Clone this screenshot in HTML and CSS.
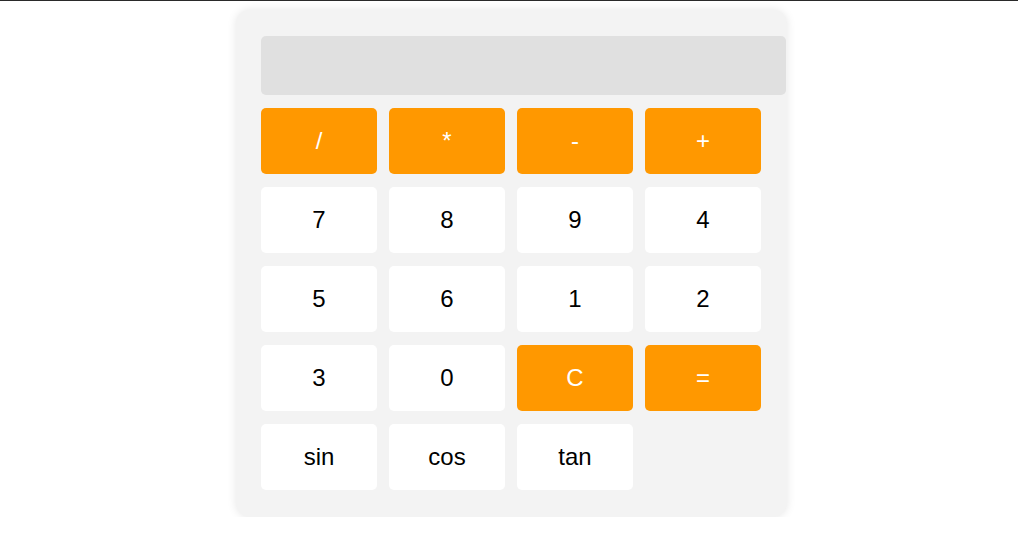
FILE: index.html
```html
<!DOCTYPE html>
<html lang="en">
<head>
<meta charset="utf-8">
<title>Calculator</title>
<link rel="stylesheet" href="styles.css">
</head>
<body>
<div class="page">
  <div class="calculator">
    <div class="display"></div>
    <div class="keys">
      <button class="key op">/</button>
      <button class="key op">*</button>
      <button class="key op">-</button>
      <button class="key op">+</button>
      <button class="key">7</button>
      <button class="key">8</button>
      <button class="key">9</button>
      <button class="key">4</button>
      <button class="key">5</button>
      <button class="key">6</button>
      <button class="key">1</button>
      <button class="key">2</button>
      <button class="key">3</button>
      <button class="key">0</button>
      <button class="key op">C</button>
      <button class="key op">=</button>
      <button class="key">sin</button>
      <button class="key">cos</button>
      <button class="key">tan</button>
    </div>
  </div>
</div>
</body>
</html>
```
FILE: styles.css
```css
html, body {
  margin: 0;
  padding: 0;
  background: #ffffff;
}
body {
  border-top: 1px solid #2a2a2a;
  font-family: "Liberation Sans", Arial, sans-serif;
}
.page {
  display: flex;
  justify-content: center;
  padding: 9px 0 0 5px;
}
.calculator {
  width: 551px;
  box-sizing: border-box;
  background: #f3f3f3;
  border-radius: 14px;
  box-shadow: 0 0 10px rgba(0, 0, 0, 0.1);
  padding: 26px 26px 27px 25px;
}
.display {
  width: 525px;
  height: 59px;
  background: #e0e0e0;
  border-radius: 5px;
  margin-bottom: 13px;
}
.keys {
  display: grid;
  grid-template-columns: repeat(4, 116px);
  grid-auto-rows: 66px;
  column-gap: 12px;
  row-gap: 13px;
}
.key {
  border: none;
  border-radius: 5px;
  background: #ffffff;
  color: #000000;
  font-family: "Liberation Sans", Arial, sans-serif;
  font-size: 24px;
  padding: 0;
  margin: 0;
}
.key.op {
  background: #ff9800;
  color: #ffffff;
}
```
